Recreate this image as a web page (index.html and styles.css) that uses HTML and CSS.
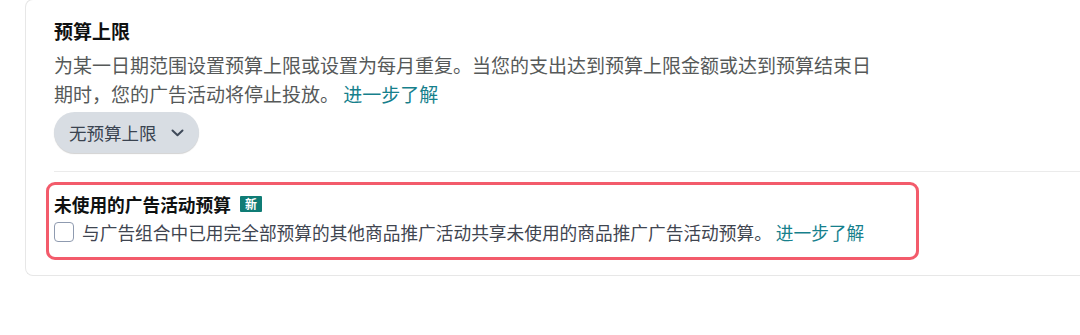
FILE: index.html
```html
<!DOCTYPE html>
<html lang="zh-CN">
<head>
<meta charset="utf-8">
<link rel="stylesheet" href="styles.css">
</head>
<body>
<div class="card">
  <div class="budget-cap">
    <h2 class="title">预算上限</h2>
    <p class="desc">为某一日期范围设置预算上限或设置为每月重复。当您的支出达到预算上限金额或达到预算结束日期时，您的广告活动将停止投放。 <a class="link" href="#">进一步了解</a></p>
    <button class="dropdown" type="button">
      <span>无预算上限</span>
      <svg class="chev" width="13" height="8" viewBox="0 0 13 8"><path d="M1.5 1.5 L6.5 6.2 L11.5 1.5" fill="none" stroke="#3f4a59" stroke-width="2" stroke-linecap="round" stroke-linejoin="round"/></svg>
    </button>
  </div>
  <div class="divider"></div>
  <div class="highlight">
    <div class="sec-title">未使用的广告活动预算<span class="badge">新</span></div>
    <label class="row">
      <span class="checkbox"></span>
      <span class="row-text">与广告组合中已用完全部预算的其他商品推广活动共享未使用的商品推广广告活动预算。 <a class="link" href="#">进一步了解</a></span>
    </label>
  </div>
</div>
</body>
</html>
```

FILE: styles.css
```css
html, body {
  margin: 0;
  padding: 0;
  background: #ffffff;
  overflow: hidden;
}
body {
  font-family: "Noto Sans CJK SC", "Noto Sans", "Liberation Sans", sans-serif;
  color: #0f1111;
}
.card {
  margin-left: 25px;
  margin-top: -1px;
  width: 1055px;
  border: 1px solid #e7e7e7;
  border-right: none;
  border-radius: 8px 0 0 8px;
  padding: 17px 0 15px 28px;
  box-sizing: border-box;
  height: 277px;
}
.title {
  margin: 0;
  font-size: 19px;
  line-height: 28px;
  font-weight: 700;
  color: #0f1111;
}
.desc {
  margin: 6px 0 0 0;
  width: 830px;
  font-size: 19px;
  line-height: 28.5px;
  color: #565959;
}
.link {
  color: #16808c;
  text-decoration: none;
}
.dropdown {
  margin-top: 4px;
  height: 41px;
  border: none;
  border-radius: 21px;
  background: #d8dde3;
  box-shadow: 0 1px 1px rgba(0, 0, 0, 0.18);
  padding: 0 15px;
  display: flex;
  align-items: center;
  gap: 14px;
  font-family: inherit;
  font-size: 17.5px;
  color: #3a4350;
}
.chev {
  display: block;
}
.divider {
  margin-top: 18px;
  border-top: 1px solid #ebebeb;
}
.highlight {
  margin-top: 10px;
  margin-left: -8px;
  width: 873px;
  height: 78px;
  box-sizing: border-box;
  border: 3px solid #f35b6b;
  border-radius: 9px;
  padding: 7px 0 0 5px;
}
.sec-title {
  font-size: 17.7px;
  line-height: 24px;
  font-weight: 700;
  color: #0f1111;
  display: flex;
  align-items: center;
}
.badge {
  margin-left: 9px;
  width: 22px;
  height: 16px;
  background: #0f7c75;
  color: #ffffff;
  font-size: 12px;
  line-height: 16px;
  font-weight: 700;
  text-align: center;
  border-radius: 1px;
}
.row {
  margin-top: 4px;
  display: flex;
  align-items: center;
  gap: 8px;
  height: 24px;
}
.checkbox {
  width: 20px;
  height: 20px;
  box-sizing: border-box;
  border: 1.5px solid #8f9bb0;
  border-radius: 4px;
  background: #ffffff;
  flex: none;
}
.row-text {
  font-size: 17.7px;
  line-height: 24px;
  color: #3f4550;
}
```
